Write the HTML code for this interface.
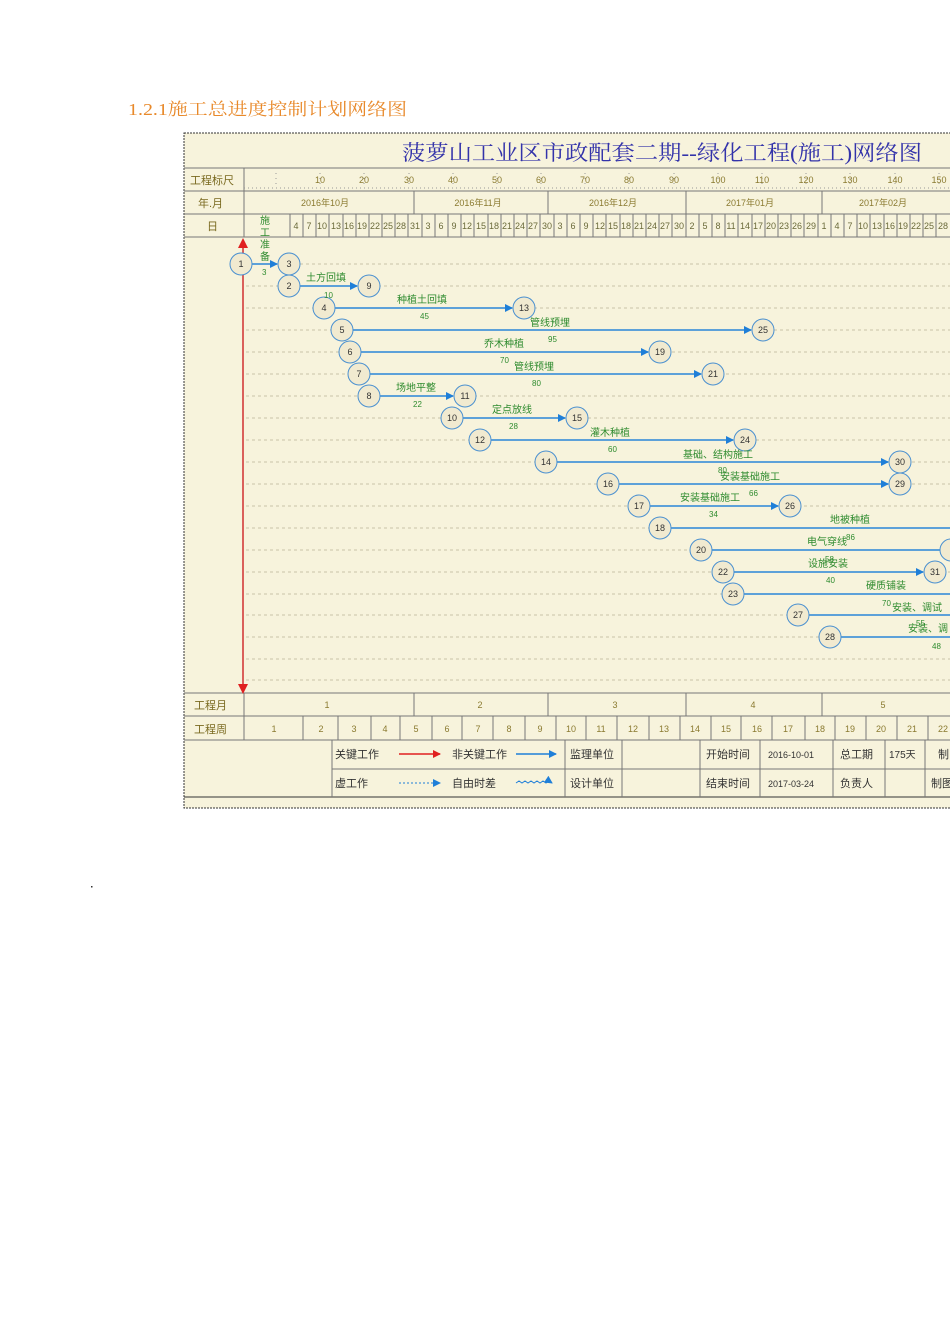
<!DOCTYPE html>
<html><head><meta charset="utf-8"><style>
html,body{margin:0;padding:0;background:#fff;width:950px;height:1344px;overflow:hidden;}
svg{position:absolute;left:0;top:0;}
svg text{font-family:"Liberation Sans","Noto Sans CJK SC",sans-serif;}
</style></head><body>
<svg width="950" height="1344" viewBox="0 0 950 1344">
<defs><marker id="a" markerWidth="8" markerHeight="8" refX="7" refY="4" orient="auto" markerUnits="userSpaceOnUse"><path d="M0,0L8,4L0,8z" fill="#1f7fd8"/></marker>
<marker id="r" markerWidth="8" markerHeight="8" refX="7" refY="4" orient="auto" markerUnits="userSpaceOnUse"><path d="M0,0L8,4L0,8z" fill="#e02020"/></marker></defs>
<text x="128" y="115" font-size="17" fill="#e8892a" textLength="279" lengthAdjust="spacingAndGlyphs" style="font-family:'Liberation Serif','Noto Serif CJK SC',serif">1.2.1施工总进度控制计划网络图</text>
<rect x="184" y="133" width="770" height="675" fill="#f7f3dc" stroke="#333" stroke-dasharray="2,1"/>
<text x="402" y="160" font-size="21" fill="#3333aa" textLength="520" lengthAdjust="spacingAndGlyphs" style="font-family:'Liberation Serif','Noto Serif CJK SC',serif">菠萝山工业区市政配套二期--绿化工程(施工)网络图</text>
<g stroke="#777" stroke-width="1" fill="none">
<line x1="184" y1="168" x2="950" y2="168"/><line x1="184" y1="191" x2="950" y2="191"/><line x1="184" y1="214" x2="950" y2="214"/><line x1="184" y1="237" x2="950" y2="237"/>
<line x1="184" y1="693" x2="950" y2="693"/><line x1="184" y1="716" x2="950" y2="716"/><line x1="184" y1="740" x2="950" y2="740"/><line x1="332" y1="769" x2="950" y2="769"/><line x1="184" y1="797" x2="950" y2="797" stroke="#333"/>
<line x1="244" y1="168" x2="244" y2="237"/><line x1="244" y1="693" x2="244" y2="740"/>
<line x1="414" y1="191" x2="414" y2="214"/><line x1="548" y1="191" x2="548" y2="214"/><line x1="686" y1="191" x2="686" y2="214"/><line x1="822" y1="191" x2="822" y2="214"/>
<line x1="414" y1="693" x2="414" y2="716"/><line x1="548" y1="693" x2="548" y2="716"/><line x1="686" y1="693" x2="686" y2="716"/><line x1="822" y1="693" x2="822" y2="716"/>
<path d="M303 716V740M338 716V740M371 716V740M400 716V740M432 716V740M462 716V740M493 716V740M525 716V740M556 716V740M586 716V740M617 716V740M649 716V740M680 716V740M711 716V740M741 716V740M772 716V740M805 716V740M835 716V740M866 716V740M897 716V740M928 716V740"/>
<path d="M332 740V797M565 740V797M622 740V797M700 740V797M760 740V797M833 740V797M885 740V797M925 740V797"/>
<path d="M290 214V237M303 214V237M316 214V237M329 214V237M343 214V237M356 214V237M369 214V237M382 214V237M395 214V237M408 214V237M422 214V237M435 214V237M448 214V237M461 214V237M474 214V237M488 214V237M501 214V237M514 214V237M527 214V237M540 214V237M554 214V237M567 214V237M580 214V237M593 214V237M606 214V237M620 214V237M633 214V237M646 214V237M659 214V237M672 214V237M686 214V237M699 214V237M712 214V237M725 214V237M738 214V237M752 214V237M765 214V237M778 214V237M791 214V237M804 214V237M818 214V237M831 214V237M844 214V237M857 214V237M870 214V237M884 214V237M897 214V237M910 214V237M923 214V237M936 214V237"/>
</g>
<path d="M244 188H950" stroke="#999" stroke-dasharray="1,3"/>
<path d="M276 173V188M320 173V188M364 173V188M409 173V188M453 173V188M497 173V188M541 173V188M585 173V188M629 173V188M674 173V188M718 173V188M762 173V188M806 173V188M850 173V188M895 173V188M939 173V188" stroke="#999" stroke-dasharray="1,4"/>
<g font-size="9" fill="#8a7a30" text-anchor="middle">
<text x="320" y="183">10</text><text x="364" y="183">20</text><text x="409" y="183">30</text><text x="453" y="183">40</text><text x="497" y="183">50</text><text x="541" y="183">60</text><text x="585" y="183">70</text><text x="629" y="183">80</text><text x="674" y="183">90</text><text x="718" y="183">100</text><text x="762" y="183">110</text><text x="806" y="183">120</text><text x="850" y="183">130</text><text x="895" y="183">140</text><text x="939" y="183">150</text>
<text x="325" y="206">2016年10月</text><text x="478" y="206">2016年11月</text><text x="613" y="206">2016年12月</text><text x="750" y="206">2017年01月</text><text x="883" y="206">2017年02月</text>
</g>
<g font-size="9" fill="#6a6a3a" text-anchor="middle">
<text x="296" y="229">4</text><text x="309" y="229">7</text><text x="322" y="229">10</text><text x="336" y="229">13</text><text x="349" y="229">16</text><text x="362" y="229">19</text><text x="375" y="229">22</text><text x="388" y="229">25</text><text x="401" y="229">28</text><text x="415" y="229">31</text><text x="428" y="229">3</text><text x="441" y="229">6</text><text x="454" y="229">9</text><text x="467" y="229">12</text><text x="481" y="229">15</text><text x="494" y="229">18</text><text x="507" y="229">21</text><text x="520" y="229">24</text><text x="533" y="229">27</text><text x="547" y="229">30</text><text x="560" y="229">3</text><text x="573" y="229">6</text><text x="586" y="229">9</text><text x="600" y="229">12</text><text x="613" y="229">15</text><text x="626" y="229">18</text><text x="639" y="229">21</text><text x="652" y="229">24</text><text x="665" y="229">27</text><text x="679" y="229">30</text><text x="692" y="229">2</text><text x="705" y="229">5</text><text x="718" y="229">8</text><text x="731" y="229">11</text><text x="745" y="229">14</text><text x="758" y="229">17</text><text x="771" y="229">20</text><text x="784" y="229">23</text><text x="797" y="229">26</text><text x="811" y="229">29</text><text x="824" y="229">1</text><text x="837" y="229">4</text><text x="850" y="229">7</text><text x="863" y="229">10</text><text x="877" y="229">13</text><text x="890" y="229">16</text><text x="903" y="229">19</text><text x="916" y="229">22</text><text x="929" y="229">25</text><text x="943" y="229">28</text>
</g>
<g font-size="11" fill="#7a6a20">
<text x="190" y="184">工程标尺</text><text x="198" y="207">年.月</text><text x="207" y="230">日</text>
<text x="194" y="709">工程月</text><text x="194" y="733">工程周</text>
</g>
<g font-size="9" fill="#8a7a30" text-anchor="middle">
<text x="327" y="708">1</text><text x="480" y="708">2</text><text x="615" y="708">3</text><text x="753" y="708">4</text><text x="883" y="708">5</text>
<text x="274" y="732">1</text><text x="321" y="732">2</text><text x="354" y="732">3</text><text x="385" y="732">4</text><text x="416" y="732">5</text><text x="447" y="732">6</text><text x="478" y="732">7</text><text x="509" y="732">8</text><text x="540" y="732">9</text><text x="571" y="732">10</text><text x="601" y="732">11</text><text x="633" y="732">12</text><text x="664" y="732">13</text><text x="695" y="732">14</text><text x="726" y="732">15</text><text x="757" y="732">16</text><text x="788" y="732">17</text><text x="820" y="732">18</text><text x="850" y="732">19</text><text x="881" y="732">20</text><text x="912" y="732">21</text><text x="943" y="732">22</text>
</g>
<g font-size="11" fill="#333">
<text x="335" y="758">关键工作</text><text x="452" y="758">非关键工作</text><text x="570" y="758">监理单位</text><text x="706" y="758">开始时间</text><text x="768" y="758" font-size="9">2016-10-01</text><text x="840" y="758">总工期</text><text x="889" y="758" font-size="10">175天</text><text x="938" y="758">制</text>
<text x="335" y="787">虚工作</text><text x="452" y="787">自由时差</text><text x="570" y="787">设计单位</text><text x="706" y="787">结束时间</text><text x="768" y="787" font-size="9">2017-03-24</text><text x="840" y="787">负责人</text><text x="931" y="787">制图</text>
</g>
<line x1="399" y1="754" x2="440" y2="754" stroke="#e02020" stroke-width="1.5" marker-end="url(#r)"/>
<line x1="516" y1="754" x2="556" y2="754" stroke="#1f7fd8" stroke-width="1.5" marker-end="url(#a)"/>
<line x1="399" y1="783" x2="440" y2="783" stroke="#1f7fd8" stroke-dasharray="2,2" marker-end="url(#a)"/>
<path d="M516 783l3-2 3 2 3-2 3 2 3-2 3 2 3-2 3 2 3-2 3 2 3-2 3 2" fill="none" stroke="#1f7fd8" marker-end="url(#a)"/>
<g stroke="#c8c3a8" stroke-dasharray="3,3">
<path d="M246 264H950M246 286H950M246 308H950M246 330H950M246 352H950M246 374H950M246 396H950M246 418H950M246 440H950M246 462H950M246 484H950M246 506H950M246 528H950M246 550H950M246 572H950M246 594H950M246 615H950M246 637H950M246 659H950M246 680H950"/>
</g>
<line x1="243" y1="690" x2="243" y2="242" stroke="#d03030" stroke-width="1.5"/>
<path d="M238 248L243 238L248 248z" fill="#e02020"/><path d="M238 684L243 694L248 684z" fill="#e02020"/>
<g stroke="#2a86d8" stroke-width="1.4" fill="none" marker-end="url(#a)">
<line x1="252" y1="264" x2="277" y2="264"/><line x1="300" y1="286" x2="357" y2="286"/><line x1="335" y1="308" x2="512" y2="308"/><line x1="353" y1="330" x2="751" y2="330"/><line x1="361" y1="352" x2="648" y2="352"/><line x1="370" y1="374" x2="701" y2="374"/><line x1="380" y1="396" x2="453" y2="396"/><line x1="463" y1="418" x2="565" y2="418"/><line x1="491" y1="440" x2="733" y2="440"/><line x1="557" y1="462" x2="888" y2="462"/><line x1="619" y1="484" x2="888" y2="484"/><line x1="650" y1="506" x2="778" y2="506"/><line x1="712" y1="550" x2="950" y2="550"/><line x1="734" y1="572" x2="923" y2="572"/>
</g>
<g stroke="#2a86d8" stroke-width="1.4"><line x1="671" y1="528" x2="950" y2="528"/><line x1="744" y1="594" x2="950" y2="594"/><line x1="809" y1="615" x2="950" y2="615"/><line x1="841" y1="637" x2="950" y2="637"/></g>
<g fill="#f1ead0" stroke="#4a90d0" stroke-width="1">
<circle cx="241" cy="264" r="11"/><circle cx="289" cy="264" r="11"/><circle cx="289" cy="286" r="11"/><circle cx="369" cy="286" r="11"/><circle cx="324" cy="308" r="11"/><circle cx="524" cy="308" r="11"/><circle cx="342" cy="330" r="11"/><circle cx="763" cy="330" r="11"/><circle cx="350" cy="352" r="11"/><circle cx="660" cy="352" r="11"/><circle cx="359" cy="374" r="11"/><circle cx="713" cy="374" r="11"/><circle cx="369" cy="396" r="11"/><circle cx="465" cy="396" r="11"/><circle cx="452" cy="418" r="11"/><circle cx="577" cy="418" r="11"/><circle cx="480" cy="440" r="11"/><circle cx="745" cy="440" r="11"/><circle cx="546" cy="462" r="11"/><circle cx="900" cy="462" r="11"/><circle cx="608" cy="484" r="11"/><circle cx="900" cy="484" r="11"/><circle cx="639" cy="506" r="11"/><circle cx="790" cy="506" r="11"/><circle cx="660" cy="528" r="11"/><circle cx="701" cy="550" r="11"/><circle cx="723" cy="572" r="11"/><circle cx="935" cy="572" r="11"/><circle cx="733" cy="594" r="11"/><circle cx="798" cy="615" r="11"/><circle cx="830" cy="637" r="11"/><circle cx="951" cy="550" r="11"/>
</g>
<g font-size="9" fill="#333" text-anchor="middle">
<text x="241" y="267">1</text><text x="289" y="267">3</text><text x="289" y="289">2</text><text x="369" y="289">9</text><text x="324" y="311">4</text><text x="524" y="311">13</text><text x="342" y="333">5</text><text x="763" y="333">25</text><text x="350" y="355">6</text><text x="660" y="355">19</text><text x="359" y="377">7</text><text x="713" y="377">21</text><text x="369" y="399">8</text><text x="465" y="399">11</text><text x="452" y="421">10</text><text x="577" y="421">15</text><text x="480" y="443">12</text><text x="745" y="443">24</text><text x="546" y="465">14</text><text x="900" y="465">30</text><text x="608" y="487">16</text><text x="900" y="487">29</text><text x="639" y="509">17</text><text x="790" y="509">26</text><text x="660" y="531">18</text><text x="701" y="553">20</text><text x="723" y="575">22</text><text x="935" y="575">31</text><text x="733" y="597">23</text><text x="798" y="618">27</text><text x="830" y="640">28</text>
</g>
<g font-size="10" fill="#2e8b2e">
<text x="260" y="224">施</text><text x="260" y="236">工</text><text x="260" y="248">准</text><text x="260" y="260">备</text><text x="262" y="275" font-size="8">3</text>
<text x="306" y="281">土方回填</text><text x="324" y="298" font-size="8">10</text>
<text x="397" y="303">种植土回填</text><text x="420" y="319" font-size="8">45</text>
<text x="530" y="326">管线预埋</text><text x="548" y="342" font-size="8">95</text>
<text x="484" y="347">乔木种植</text><text x="500" y="363" font-size="8">70</text>
<text x="514" y="370">管线预埋</text><text x="532" y="386" font-size="8">80</text>
<text x="396" y="391">场地平整</text><text x="413" y="407" font-size="8">22</text>
<text x="492" y="413">定点放线</text><text x="509" y="429" font-size="8">28</text>
<text x="590" y="436">灌木种植</text><text x="608" y="452" font-size="8">60</text>
<text x="683" y="458">基础、结构施工</text><text x="718" y="473" font-size="8">80</text>
<text x="720" y="480">安装基础施工</text><text x="749" y="496" font-size="8">66</text>
<text x="680" y="501">安装基础施工</text><text x="709" y="517" font-size="8">34</text>
<text x="830" y="523">地被种植</text>
<text x="807" y="545">电气穿线</text><text x="846" y="540" font-size="8">86</text>
<text x="808" y="567">设施安装</text><text x="825" y="562" font-size="8">58</text><text x="826" y="583" font-size="8">40</text>
<text x="866" y="589">硬质铺装</text>
<text x="882" y="606" font-size="8">70</text><text x="892" y="611">安装、调试</text>
<text x="908" y="632">安装、调</text><text x="916" y="626" font-size="8">55</text><text x="932" y="649" font-size="8">48</text>
</g>
<rect x="91" y="886" width="1.5" height="1.5" fill="#333"/>
</svg>
</body></html>
